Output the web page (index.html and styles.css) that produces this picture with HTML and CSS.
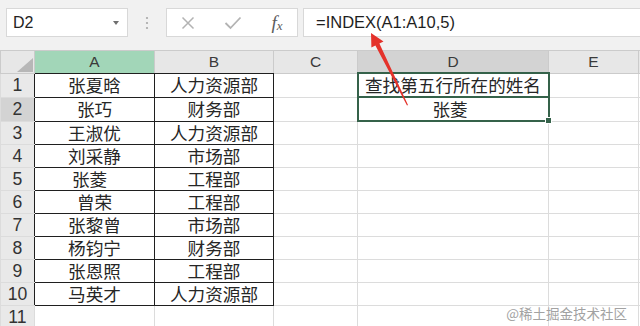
FILE: index.html
```html
<!DOCTYPE html>
<html lang="zh-CN">
<head>
    <meta charset="UTF-8">
    <meta name="viewport" content="width=device-width, initial-scale=1.0">
    <title>INDEX 函数示例</title>
    <link rel="stylesheet" href="styles.css">
</head>
<body>
    <div class="toolbar">
        <div class="name-box">
            <span>D2</span>
            <svg class="caret" width="6" height="4" viewBox="0 0 6 4"><path d="M0 0 L6 0 L3 4 Z" fill="#6f6f6f"/></svg>
        </div>
        <div class="grip">
            <svg width="4" height="14" viewBox="0 0 4 14">
                <circle cx="2" cy="2" r="1.1" fill="#a8a8a8"/>
                <circle cx="2" cy="7" r="1.1" fill="#a8a8a8"/>
                <circle cx="2" cy="12" r="1.1" fill="#a8a8a8"/>
            </svg>
        </div>
        <div class="fx-buttons">
            <svg width="14" height="14" viewBox="0 0 14 14"><path d="M1.5 1.5 L12.5 12.5 M12.5 1.5 L1.5 12.5" stroke="#b3b3b3" stroke-width="1.5"/></svg>
            <svg width="18" height="14" viewBox="0 0 18 14"><path d="M1.5 7 L6.5 12 L16.5 1.5" stroke="#b3b3b3" stroke-width="1.8" fill="none"/></svg>
            <span class="fx">f<sub>x</sub></span>
        </div>
        <div class="formula">=INDEX(A1:A10,5)</div>
    </div>

    <table class="sheet">
        <colgroup>
            <col class="c-rh"><col class="c-a"><col class="c-b"><col class="c-c"><col class="c-d"><col class="c-e"><col class="c-f">
        </colgroup>
        <tr class="head">
            <th class="corner"><div class="corner-box"><span class="tri"></span></div></th>
            <th class="col-a t-bottom">A</th>
            <th class="t-bottom">B</th>
            <th class="g-right">C</th>
            <th class="col-sel">D</th>
            <th>E</th>
            <th></th>
        </tr>
        <tr>
            <th class="rh t-right">1</th>
            <td class="t">张夏晗</td><td class="t">人力资源部</td><td class="g-right"></td>
            <td class="d-box">查找第五行所在的姓名</td><td></td><td></td>
        </tr>
        <tr>
            <th class="rh rh-sel t-right">2</th>
            <td class="t">张巧</td><td class="t">财务部</td><td class="g-right"></td>
            <td class="d-box active">张菱<span class="handle"></span></td><td></td><td></td>
        </tr>
        <tr>
            <th class="rh t-right">3</th>
            <td class="t">王淑优</td><td class="t">人力资源部</td><td></td><td></td><td></td><td></td>
        </tr>
        <tr>
            <th class="rh t-right">4</th>
            <td class="t">刘采静</td><td class="t">市场部</td><td></td><td></td><td></td><td></td>
        </tr>
        <tr>
            <th class="rh t-right">5</th>
            <td class="t shift">张菱</td><td class="t">工程部</td><td></td><td></td><td></td><td></td>
        </tr>
        <tr>
            <th class="rh t-right">6</th>
            <td class="t">曾荣</td><td class="t">工程部</td><td></td><td></td><td></td><td></td>
        </tr>
        <tr>
            <th class="rh t-right">7</th>
            <td class="t">张黎曾</td><td class="t">市场部</td><td></td><td></td><td></td><td></td>
        </tr>
        <tr>
            <th class="rh t-right">8</th>
            <td class="t">杨钧宁</td><td class="t">财务部</td><td></td><td></td><td></td><td></td>
        </tr>
        <tr>
            <th class="rh t-right">9</th>
            <td class="t">张恩照</td><td class="t">工程部</td><td></td><td></td><td></td><td></td>
        </tr>
        <tr>
            <th class="rh t-right">10</th>
            <td class="t">马英才</td><td class="t">人力资源部</td><td></td><td></td><td></td><td></td>
        </tr>
        <tr>
            <th class="rh">11</th>
            <td></td><td></td><td></td><td></td><td></td><td></td>
        </tr>
    </table>

    <svg class="arrow" width="640" height="326" viewBox="0 0 640 326">
        <path d="M371 33 L383.5 41.5 L379.4 43.4 L408 105 L407 105.4 L375.4 45.4 L371.4 47.6 Z" fill="#e4322b"/>
    </svg>

    <div class="watermark">@稀土掘金技术社区</div>
</body>
</html>
```

FILE: styles.css
```css
body {
    margin: 0;
    width: 640px;
    height: 326px;
    overflow: hidden;
    position: relative;
    background: #fff;
    font-family: "Noto Sans CJK SC", "Liberation Sans", sans-serif;
    color: #262626;
}

/* formula bar */
.toolbar {
    display: flex;
    align-items: flex-start;
    height: 50px;
    box-sizing: border-box;
    padding: 8px 0 0 6px;
    background: #f1f1f1;
}
.name-box,
.fx-buttons,
.formula {
    height: 29px;
    box-sizing: border-box;
    background: #fff;
    border: 1px solid #d8d8d8;
    display: flex;
    align-items: center;
}
.name-box {
    width: 122px;
    padding: 0 8px 0 6px;
    justify-content: space-between;
    font-family: "Liberation Sans", sans-serif;
    font-size: 16px;
    color: #222;
}
.caret {
    margin-top: 1px;
}
.grip {
    width: 38px;
    height: 29px;
    display: flex;
    align-items: center;
    justify-content: center;
}
.fx-buttons {
    width: 132px;
    justify-content: space-around;
}
.fx {
    font-family: "Liberation Serif", serif;
    font-style: italic;
    font-size: 19px;
    color: #5c5c5c;
    line-height: 1;
}
.fx sub {
    font-size: 13px;
    vertical-align: -1px;
}
.formula {
    flex: 1;
    margin-left: 5px;
    padding-left: 12px;
    border-right: none;
    font-family: "Liberation Sans", sans-serif;
    font-size: 16.5px;
    color: #1e1e1e;
}

/* grid */
.sheet {
    border-collapse: collapse;
    table-layout: fixed;
    width: 640px;
}
.c-rh { width: 34px; }
.c-a { width: 120px; }
.c-b { width: 119px; }
.c-c { width: 84px; }
.c-d { width: 191px; }
.c-e { width: 90px; }
.c-f { width: 2px; }

.sheet td,
.sheet th {
    border: 1px solid #dcdcdc;
    padding: 0;
    height: 22px;
    text-align: center;
    white-space: nowrap;
    overflow: hidden;
    font-size: 17.6px;
    font-weight: 400;
    line-height: 22px;
}
.head th {
    height: 21px;
    background: #e7e7e7;
    border-color: #cbcbcb;
    font-family: "Liberation Sans", sans-serif;
    font-size: 15.5px;
    color: #3a3a3a;
    line-height: 21px;
}
.head th.col-a {
    background: #a2d6b8;
}
.head th.col-sel {
    background: #d3d3d3;
}
.corner {
    vertical-align: bottom;
}
.corner-box {
    display: flex;
    justify-content: flex-end;
    align-items: flex-end;
    padding: 0 1px 1px 0;
}
.tri {
    width: 0;
    height: 0;
    border-left: 16px solid transparent;
    border-bottom: 14px solid #b7b7b7;
}
.rh {
    background: #e9e9e9;
    border-color: #cfcfcf;
    font-family: "Liberation Sans", sans-serif;
    color: #333;
    font-size: 17.5px;
}
.sheet .rh-sel {
    background: #d3d3d3;
}

/* bordered data range */
.sheet td.t {
    border-color: #1f1f1f;
}
.sheet .t-right {
    border-right-color: #1f1f1f;
}
.sheet .t-bottom {
    border-bottom-color: #1f1f1f;
}
.shift {
    text-indent: -10px;
}

/* D1:D2 */
.sheet td.d-box {
    border: 2px solid #35624a;
    position: relative;
    overflow: visible;
}
.sheet .g-right {
    border-right: 2px solid #35624a;
}
.sheet .head .g-right {
    border-right: 1px solid #cbcbcb;
}
.handle {
    position: absolute;
    right: -4px;
    bottom: -4px;
    width: 5px;
    height: 5px;
    background: #35624a;
    border: 1px solid #fff;
}
.active {
    text-indent: -6px;
}

/* overlays */
.arrow {
    position: absolute;
    left: 0;
    top: 0;
    pointer-events: none;
}
.watermark {
    position: absolute;
    right: 13px;
    top: 303px;
    font-size: 13.5px;
    line-height: 20px;
    color: #a2a2a2;
    text-shadow: 0 0 2px #fff, 0 0 1px #fff;
}
```
